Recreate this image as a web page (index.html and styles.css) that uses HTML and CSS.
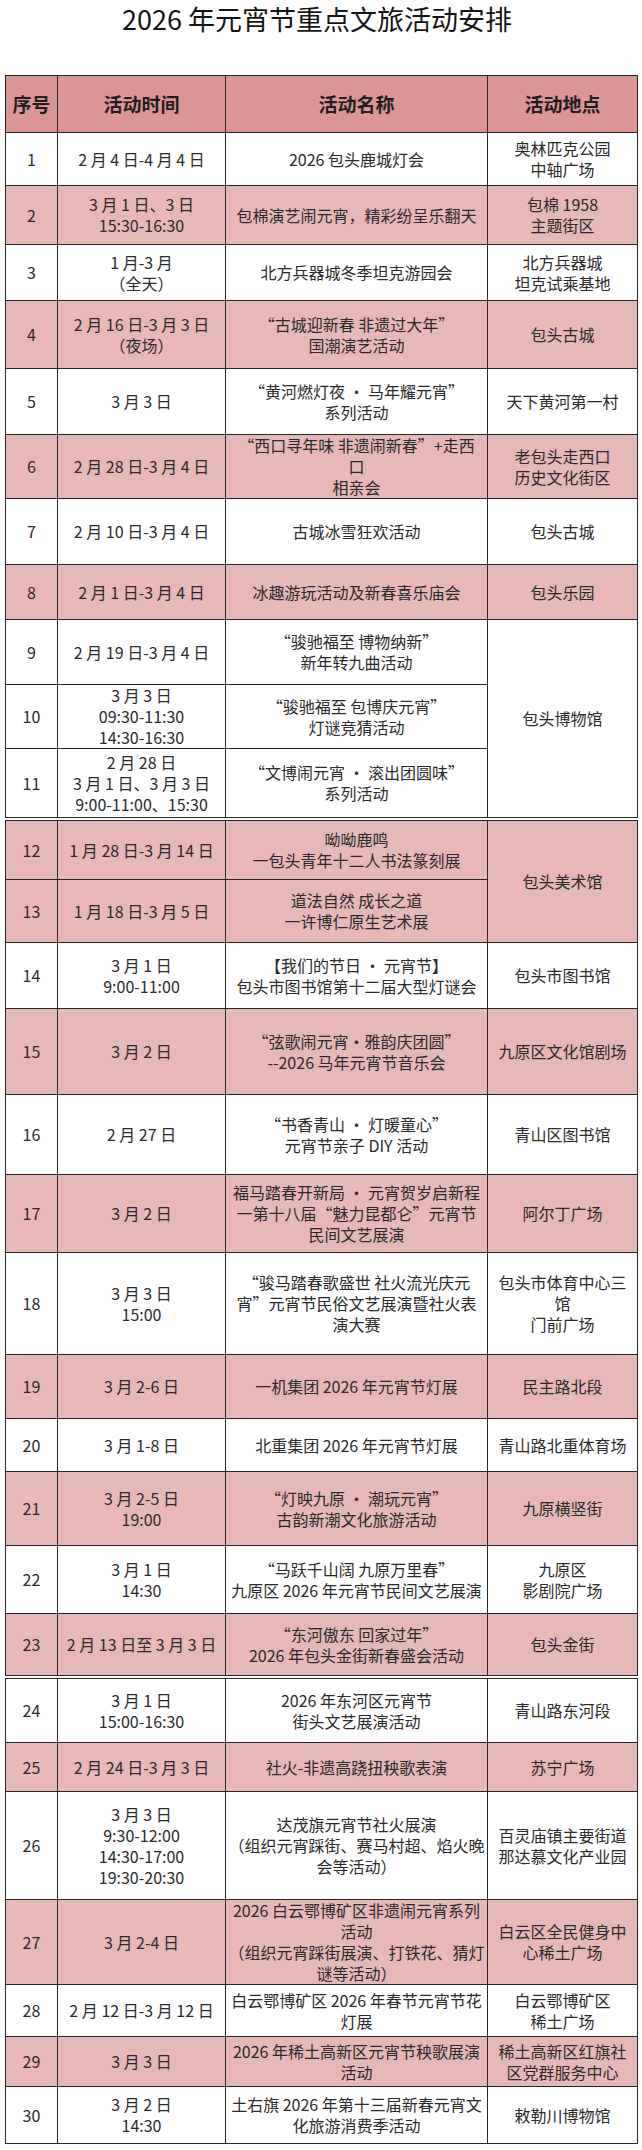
FILE: index.html
```html
<!DOCTYPE html>
<html lang="zh-CN">
<head>
<meta charset="utf-8">
<title>2026年元宵节重点文旅活动安排</title>
<link rel="stylesheet" href="styles.css">
</head>
<body>
<div class="page">
  <h1 class="title">2026 年元宵节重点文旅活动安排</h1>

  <table class="sched first">
    <colgroup><col class="c1"><col class="c2"><col class="c3"><col class="c4"></colgroup>
    <tr class="h57"><th>序号</th><th>活动时间</th><th>活动名称</th><th>活动地点</th></tr>
    <tr class="h53"><td>1</td><td>2 月 4 日-4 月 4 日</td><td>2026 包头鹿城灯会</td><td>奥林匹克公园<br>中轴广场</td></tr>
    <tr class="h59 pk"><td>2</td><td>3 月 1 日、3 日<br>15:30-16:30</td><td>包棉演艺闹元宵，精彩纷呈乐翻天</td><td>包棉 1958<br>主题街区</td></tr>
    <tr class="h56"><td>3</td><td>1 月-3 月<br>（全天）</td><td>北方兵器城冬季坦克游园会</td><td>北方兵器城<br>坦克试乘基地</td></tr>
    <tr class="h68 pk"><td>4</td><td>2 月 16 日-3 月 3 日<br>（夜场）</td><td>“古城迎新春 非遗过大年”<br>国潮演艺活动</td><td>包头古城</td></tr>
    <tr class="h66"><td>5</td><td>3 月 3 日</td><td>“黄河燃灯夜 · 马年耀元宵”<br>系列活动</td><td>天下黄河第一村</td></tr>
    <tr class="h63 pk"><td>6</td><td>2 月 28 日-3 月 4 日</td><td>“西口寻年味 非遗闹新春”+走西<br>口<br>相亲会</td><td>老包头走西口<br>历史文化街区</td></tr>
    <tr class="h66"><td>7</td><td>2 月 10 日-3 月 4 日</td><td>古城冰雪狂欢活动</td><td>包头古城</td></tr>
    <tr class="h55 pk"><td>8</td><td>2 月 1 日-3 月 4 日</td><td>冰趣游玩活动及新春喜乐庙会</td><td>包头乐园</td></tr>
    <tr class="h65"><td>9</td><td>2 月 19 日-3 月 4 日</td><td>“骏驰福至 博物纳新”<br>新年转九曲活动</td><td rowspan="3">包头博物馆</td></tr>
    <tr class="h64"><td>10</td><td>3 月 3 日<br>09:30-11:30<br>14:30-16:30</td><td>“骏驰福至 包博庆元宵”<br>灯谜竞猜活动</td></tr>
    <tr class="h69"><td>11</td><td>2 月 28 日<br>3 月 1 日、3 月 3 日<br>9:00-11:00、15:30</td><td>“文博闹元宵 · 滚出团圆味”<br>系列活动</td></tr>
  </table>

  <table class="sched">
    <colgroup><col class="c1"><col class="c2"><col class="c3"><col class="c4"></colgroup>
    <tr class="h59 pk"><td>12</td><td>1 月 28 日-3 月 14 日</td><td>呦呦鹿鸣<br>一包头青年十二人书法篆刻展</td><td rowspan="2">包头美术馆</td></tr>
    <tr class="h63 pk"><td>13</td><td>1 月 18 日-3 月 5 日</td><td>道法自然 成长之道<br>一许博仁原生艺术展</td></tr>
    <tr class="h66"><td>14</td><td>3 月 1 日<br>9:00-11:00</td><td>【我们的节日 · 元宵节】<br>包头市图书馆第十二届大型灯谜会</td><td>包头市图书馆</td></tr>
    <tr class="h86 pk"><td>15</td><td>3 月 2 日</td><td>“弦歌闹元宵·雅韵庆团圆”<br>--2026 马年元宵节音乐会</td><td>九原区文化馆剧场</td></tr>
    <tr class="h80"><td>16</td><td>2 月 27 日</td><td>“书香青山 · 灯暖童心”<br>元宵节亲子 DIY 活动</td><td>青山区图书馆</td></tr>
    <tr class="h78 pk"><td>17</td><td>3 月 2 日</td><td>福马踏春开新局 · 元宵贺岁启新程<br>一第十八届“魅力昆都仑”元宵节<br>民间文艺展演</td><td>阿尔丁广场</td></tr>
    <tr class="h102"><td>18</td><td>3 月 3 日<br>15:00</td><td>“骏马踏春歌盛世 社火流光庆元<br>宵”元宵节民俗文艺展演暨社火表<br>演大赛</td><td>包头市体育中心三<br>馆<br>门前广场</td></tr>
    <tr class="h64 pk"><td>19</td><td>3 月 2-6 日</td><td>一机集团 2026 年元宵节灯展</td><td>民主路北段</td></tr>
    <tr class="h53"><td>20</td><td>3 月 1-8 日</td><td>北重集团 2026 年元宵节灯展</td><td>青山路北重体育场</td></tr>
    <tr class="h74 pk"><td>21</td><td>3 月 2-5 日<br>19:00</td><td>“灯映九原 · 潮玩元宵”<br>古韵新潮文化旅游活动</td><td>九原横竖街</td></tr>
    <tr class="h68"><td>22</td><td>3 月 1 日<br>14:30</td><td>“马跃千山阔 九原万里春”<br>九原区 2026 年元宵节民间文艺展演</td><td>九原区<br>影剧院广场</td></tr>
    <tr class="h62 pk"><td>23</td><td>2 月 13 日至 3 月 3 日</td><td>“东河傲东 回家过年”<br>2026 年包头金街新春盛会活动</td><td>包头金街</td></tr>
  </table>

  <table class="sched">
    <colgroup><col class="c1"><col class="c2"><col class="c3"><col class="c4"></colgroup>
    <tr class="h64"><td>24</td><td>3 月 1 日<br>15:00-16:30</td><td>2026 年东河区元宵节<br>街头文艺展演活动</td><td>青山路东河段</td></tr>
    <tr class="h49 pk"><td>25</td><td>2 月 24 日-3 月 3 日</td><td>社火-非遗高跷扭秧歌表演</td><td>苏宁广场</td></tr>
    <tr class="h108"><td>26</td><td>3 月 3 日<br>9:30-12:00<br>14:30-17:00<br>19:30-20:30</td><td>达茂旗元宵节社火展演<br>（组织元宵踩街、赛马村超、焰火晚<br>会等活动）</td><td>百灵庙镇主要街道<br>那达慕文化产业园</td></tr>
    <tr class="h85 pk"><td>27</td><td>3 月 2-4 日</td><td>2026 白云鄂博矿区非遗闹元宵系列<br>活动<br>（组织元宵踩街展演、打铁花、猜灯<br>谜等活动）</td><td>白云区全民健身中<br>心稀土广场</td></tr>
    <tr class="h52"><td>28</td><td>2 月 12 日-3 月 12 日</td><td>白云鄂博矿区 2026 年春节元宵节花<br>灯展</td><td>白云鄂博矿区<br>稀土广场</td></tr>
    <tr class="h50 pk"><td>29</td><td>3 月 3 日</td><td>2026 年稀土高新区元宵节秧歌展演<br>活动</td><td>稀土高新区红旗社<br>区党群服务中心</td></tr>
    <tr class="h57"><td>30</td><td>3 月 2 日<br>14:30</td><td>土右旗 2026 年第十三届新春元宵文<br>化旅游消费季活动</td><td>敕勒川博物馆</td></tr>
  </table>
</div>
</body>
</html>
```

FILE: styles.css
```css
html, body {
  margin: 0;
  padding: 0;
  background: #ffffff;
}

body {
  font-family: "Noto Sans CJK SC", "Liberation Sans", sans-serif;
  color: #2a2a2a;
}

.page {
  width: 632px;
  margin-left: 5px;
}

.title {
  margin: 0;
  height: 37px;
  padding-right: 8px;
  font-size: 27px;
  line-height: 37px;
  font-weight: 400;
  text-align: center;
  color: #141414;
}

.sched {
  width: 632px;
  border-collapse: collapse;
  table-layout: fixed;
  margin-top: 2px;
}

.sched.first {
  margin-top: 38px;
}

.c1 { width: 52px; }
.c2 { width: 168px; }
.c3 { width: 262px; }
.c4 { width: 150px; }

.sched th,
.sched td {
  border: 1px solid #262626;
  padding: 0 2px;
  text-align: center;
  vertical-align: middle;
  white-space: nowrap;
  overflow: hidden;
}

.sched td {
  font-size: 16px;
  line-height: 21px;
  font-weight: 400;
}

.sched th {
  background: #d99694;
  font-size: 19px;
  line-height: 24px;
  font-weight: 700;
  color: #1e1e1e;
}

.pk td {
  background: #e6b8b7;
}

.h49 { height: 49px; }
.h50 { height: 50px; }
.h52 { height: 52px; }
.h53 { height: 53px; }
.h55 { height: 55px; }
.h56 { height: 56px; }
.h57 { height: 57px; }
.h59 { height: 59px; }
.h62 { height: 62px; }
.h63 { height: 63px; }
.h64 { height: 64px; }
.h65 { height: 65px; }
.h66 { height: 66px; }
.h68 { height: 68px; }
.h69 { height: 69px; }
.h74 { height: 74px; }
.h78 { height: 78px; }
.h80 { height: 80px; }
.h85 { height: 85px; }
.h86 { height: 86px; }
.h102 { height: 102px; }
.h108 { height: 108px; }
```
